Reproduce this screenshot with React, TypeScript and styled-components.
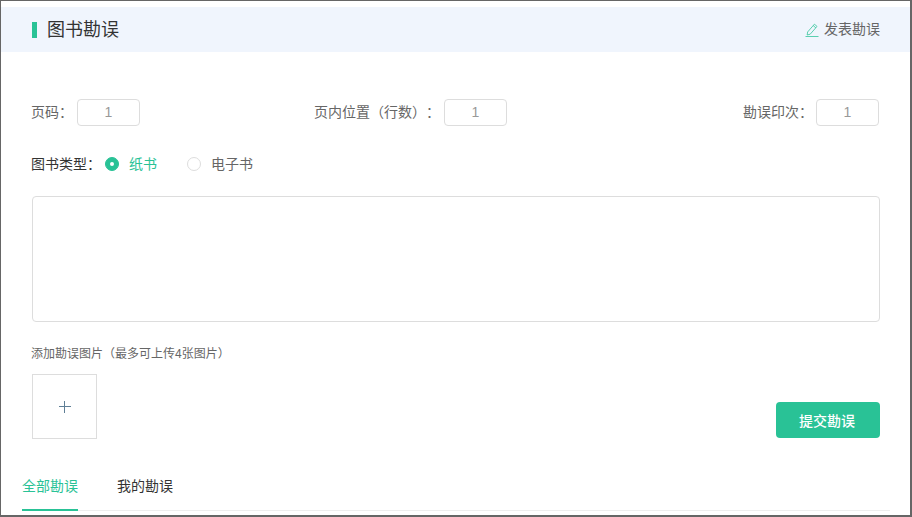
import styled, { createGlobalStyle } from 'styled-components';

const GlobalStyle = createGlobalStyle`
  html, body {
    margin: 0;
    padding: 0;
    background: #fff;
  }

  body {
    font-family: 'Liberation Sans', 'Noto Sans CJK SC', sans-serif;
  }

  * {
    box-sizing: border-box;
  }
`;

const App = () => {
  return (
    <Frame>
      <GlobalStyle />
      <Header>
        <Title>
          <TitleText>图书勘误</TitleText>
        </Title>
        <PublishLink>
          <svg width="14" height="14" viewBox="0 0 14 14" fill="none">
            <path d="M2.6 9 9.4 1.2l2.6 2.2-6.8 7.8-3 .8.4-3Z" stroke="#29c296" strokeOpacity="0.75" />
            <path d="M8.2 2.6l2.6 2.2" stroke="#29c296" strokeOpacity="0.75" />
            <path d="M0.5 13.5h13" stroke="#29c296" strokeOpacity="0.75" />
          </svg>
          <LiftedText>发表勘误</LiftedText>
        </PublishLink>
      </Header>

      <Form>
        <FieldRow>
          <Field>
            <LiftedText>页码：</LiftedText>
            <NumberInput defaultValue="1" />
          </Field>
          <MiddleField>
            <LiftedText>
              页内位置（行数）<SpacedColon>：</SpacedColon>
            </LiftedText>
            <NumberInput defaultValue="1" />
          </MiddleField>
          <LastField>
            <LiftedText>勘误印次：</LiftedText>
            <NumberInput defaultValue="1" />
          </LastField>
        </FieldRow>

        <TypeRow>
          <TypeLabel>图书类型：</TypeLabel>
          <RadioItem active>
            <RadioDot active />
            <LiftedText>纸书</LiftedText>
          </RadioItem>
          <RadioItem>
            <RadioDot />
            <LiftedText>电子书</LiftedText>
          </RadioItem>
        </TypeRow>

        <Content />

        <Caption>添加勘误图片（最多可上传4张图片）</Caption>
        <UploadRow>
          <UploadBox>
            <svg width="12" height="12" viewBox="0 0 12 12">
              <path d="M5.5 0v12M0 5.5h12" stroke="#5f7f96" strokeWidth="1" />
            </svg>
          </UploadBox>
          <SubmitButton>提交勘误</SubmitButton>
        </UploadRow>
      </Form>

      <Tabs>
        <Tab active>全部勘误</Tab>
        <Tab>我的勘误</Tab>
      </Tabs>
    </Frame>
  );
};

export default App;

const Frame = styled.div`
  width: 912px;
  height: 517px;
  padding-top: 6px;
  border: 1px solid #666;
  border-right-width: 2px;
  border-bottom-width: 2px;
  overflow: hidden;
  background: #fff;
`;

const Header = styled.div`
  display: flex;
  align-items: center;
  justify-content: space-between;
  height: 45px;
  padding: 0 30px 0 31px;
  background: #f0f5fd;
`;

const Title = styled.h2`
  display: flex;
  align-items: center;
  margin: 0;
  font-size: 18px;
  font-weight: 400;
  color: #333;

  &::before {
    content: '';
    width: 5px;
    height: 16px;
    margin-right: 10px;
    background: #29c296;
  }
`;

const TitleText = styled.span`
  padding-bottom: 4px;
`;

const LiftedText = styled.span`
  padding-bottom: 3px;
`;

const PublishLink = styled.a`
  display: flex;
  align-items: center;
  gap: 5px;
  font-size: 14px;
  color: #666;
`;

const Form = styled.div`
  padding: 47px 30px 0 31px;
`;

const FieldRow = styled.div`
  display: flex;
  align-items: center;
  margin-left: -1px;
  padding-right: 1px;
`;

const Field = styled.label`
  display: flex;
  align-items: center;
  font-size: 14px;
  color: #666;
`;

const MiddleField = styled(Field)`
  margin-left: 174px;
`;

const LastField = styled(Field)`
  margin-left: auto;

  input {
    margin-left: 3px;
  }
`;

const SpacedColon = styled.span`
  margin-left: 7px;
`;

const NumberInput = styled.input`
  width: 63px;
  height: 27px;
  margin-left: 4px;
  padding: 0 0 2px;
  border: 1px solid #ddd;
  border-radius: 4px;
  outline: none;
  background: #fff;
  font-family: inherit;
  font-size: 14px;
  color: #999;
  text-align: center;
`;

const TypeRow = styled.div`
  display: flex;
  align-items: center;
  height: 20px;
  margin: 28px 0 0 -1px;
`;

const TypeLabel = styled.span`
  width: 74px;
  padding-bottom: 3px;
  font-size: 14px;
  color: #333;
`;

const RadioItem = styled.span<{ active?: boolean }>`
  display: flex;
  align-items: center;
  gap: 10px;
  width: 82px;
  font-size: 14px;
  color: ${props => (props.active ? '#29c296' : '#666')};
`;

const RadioDot = styled.i<{ active?: boolean }>`
  display: flex;
  align-items: center;
  justify-content: center;
  width: 14px;
  height: 14px;
  border-radius: 50%;
  border: 1px solid ${props => (props.active ? '#29c296' : '#ddd')};
  background: ${props => (props.active ? '#29c296' : '#fff')};

  &::after {
    content: '';
    width: 4px;
    height: 4px;
    border-radius: 50%;
    background: #fff;
    display: ${props => (props.active ? 'block' : 'none')};
  }
`;

const Content = styled.textarea`
  display: block;
  width: 848px;
  height: 126px;
  margin-top: 22px;
  border: 1px solid #ddd;
  border-radius: 4px;
  outline: none;
  resize: none;
`;

const Caption = styled.p`
  margin: 24px 0 0 -1px;
  font-size: 12px;
  line-height: 17px;
  color: #666;
`;

const UploadRow = styled.div`
  display: flex;
  align-items: flex-end;
  justify-content: space-between;
  margin-top: 11px;
`;

const UploadBox = styled.div`
  display: flex;
  align-items: center;
  justify-content: center;
  width: 65px;
  height: 65px;
  border: 1px solid #ddd;
`;

const SubmitButton = styled.button`
  width: 104px;
  height: 36px;
  margin-bottom: 1px;
  padding: 0 2px 0 0;
  border: 0;
  border-radius: 4px;
  background: #29c296;
  font-family: inherit;
  font-size: 14px;
  font-weight: 500;
  color: #fff;
`;

const Tabs = styled.div`
  display: flex;
  gap: 39px;
  width: 868px;
  margin: 26px 0 0 21px;
  border-bottom: 1px solid #eee;
`;

const Tab = styled.div<{ active?: boolean }>`
  height: 46px;
  margin-bottom: -1px;
  padding-top: 11px;
  border-bottom: 2px solid ${props => (props.active ? '#29c296' : 'transparent')};
  font-size: 14px;
  line-height: 20px;
  color: ${props => (props.active ? '#29c296' : '#333')};
`;
